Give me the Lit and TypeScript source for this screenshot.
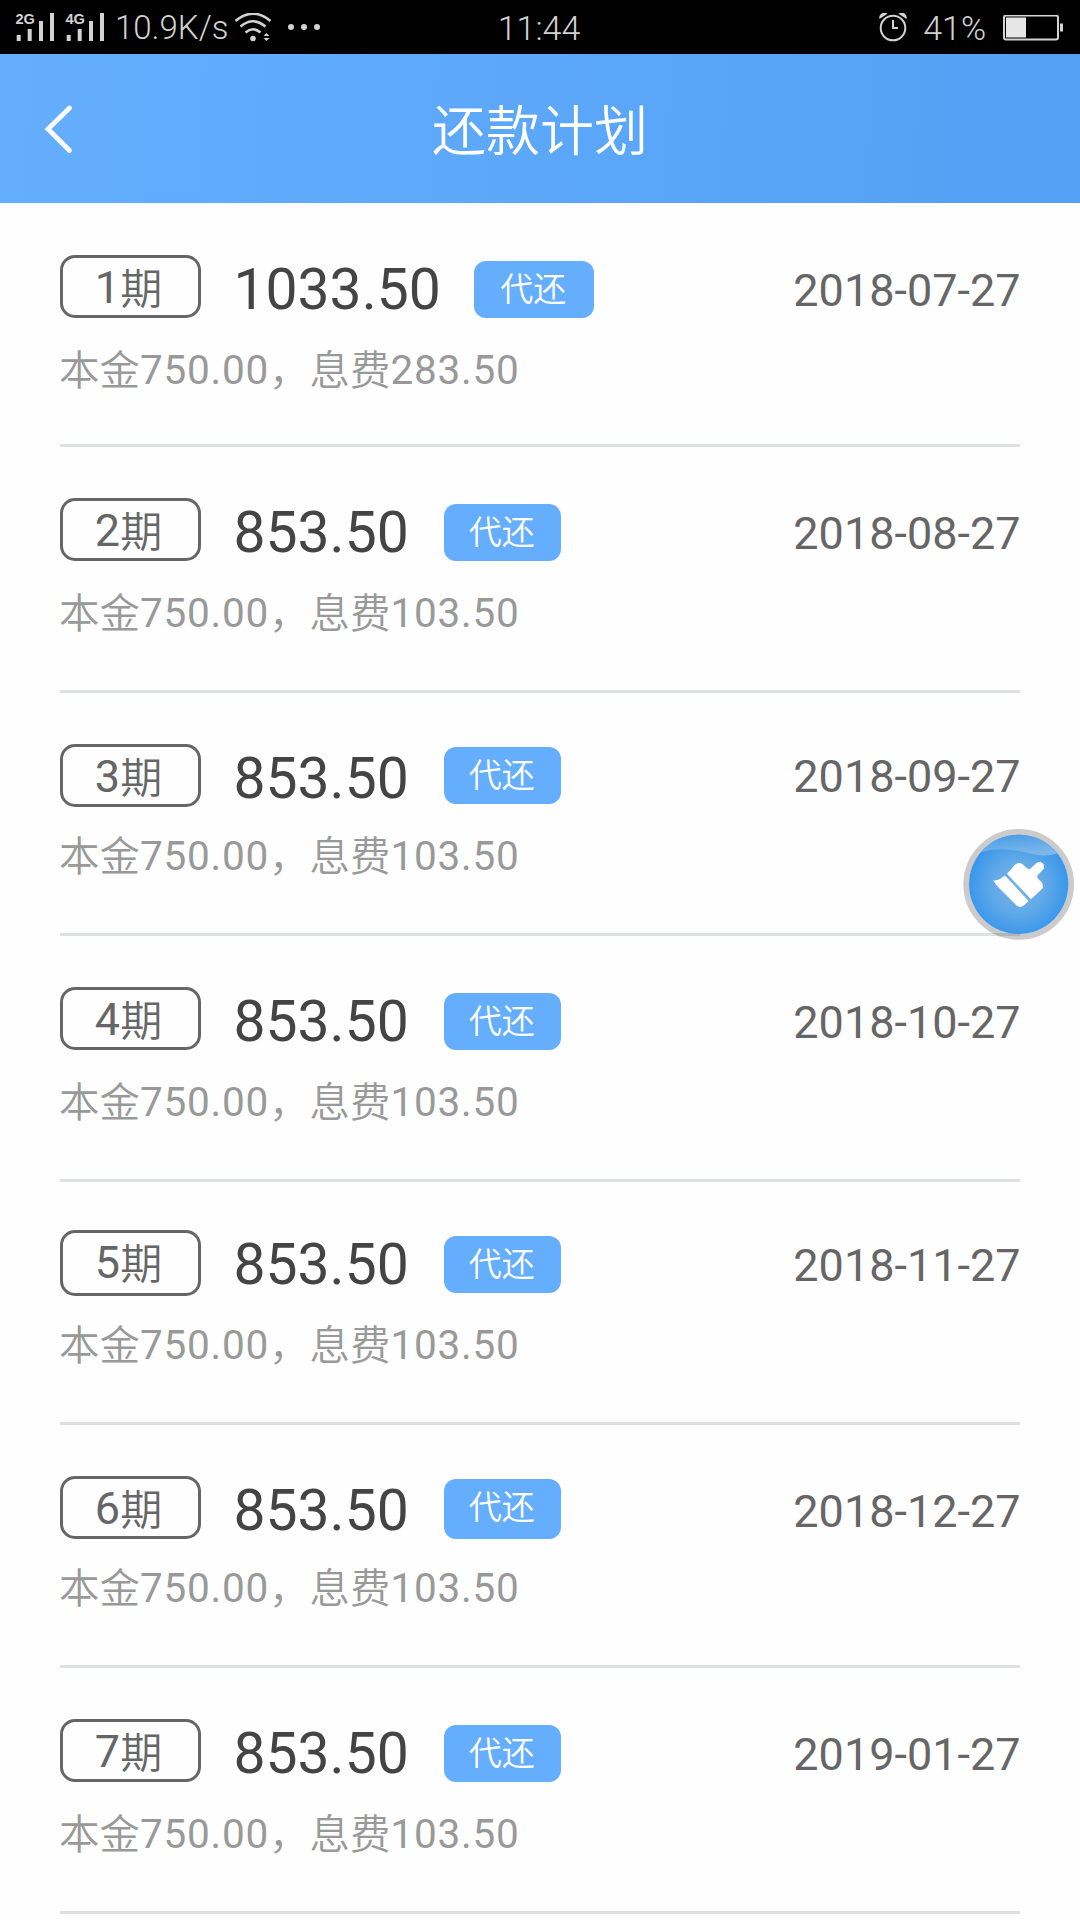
import { LitElement, html, css, svg } from "lit";
import { customElement } from "lit/decorators.js";

interface Installment {
  period: number;
  amount: string;
  interest: string;
  date: string;
}

const PLAN: Installment[] = [
  { period: 1, amount: "1033.50", interest: "283.50", date: "2018-07-27" },
  { period: 2, amount: "853.50", interest: "103.50", date: "2018-08-27" },
  { period: 3, amount: "853.50", interest: "103.50", date: "2018-09-27" },
  { period: 4, amount: "853.50", interest: "103.50", date: "2018-10-27" },
  { period: 5, amount: "853.50", interest: "103.50", date: "2018-11-27" },
  { period: 6, amount: "853.50", interest: "103.50", date: "2018-12-27" },
  { period: 7, amount: "853.50", interest: "103.50", date: "2019-01-27" },
];

const signal = svg`
  <rect x="2.700" y="26" width="4" height="6"/>
  <rect x="13.700" y="20" width="4" height="12"/>
  <rect x="25" y="12" width="4" height="20"/>
  <rect x="36" y="4" width="4" height="28"/>`;

@customElement("status-bar")
class StatusBar extends LitElement {
  static styles = css`
    :host {
      display: flex;
      box-sizing: border-box;
      align-items: center;
      justify-content: space-between;
      height: 54px;
      padding-top: 2px;
      background: #000;
      color: #d2d2d2;
      font-family: Roboto, sans-serif;
      font-weight: 300;
      font-size: 33px;
      line-height: 52px;
    }
    svg { display: block; fill: #d2d2d2; flex: none; }
    .side { display: flex; align-items: center; flex: 1; }
    .left { padding-left: 14px; }
    .right { justify-content: flex-end; padding-right: 16px; }
    .net { font: 700 14px/1 "Liberation Sans", sans-serif; }
    .signal { overflow: visible; }
    .second { margin-left: 8px; }
    .speed { margin-left: 9px; white-space: nowrap; }
    .wifi { margin-left: 5px; }
    .dots { margin-left: 15px; }
    .clock { font-size: 34px; }
    .percent { margin-left: 15px; font-size: 34px; }
    .battery { margin-left: 17px; }
  `;
  render() {
    const bars = (label: string, extra: string) => html`
      <svg class="signal ${extra}" width="42" height="38" viewBox="0 0 42 38">
        ${signal}
        <text class="net" x="1.500" y="15" textLength="19.500" lengthAdjust="spacingAndGlyphs">${label}</text>
      </svg>`;
    return html`
      <div class="side left">
        ${bars("2G", "")}${bars("4G", "second")}
        <span class="speed">10.9K/s</span>
        <svg class="wifi" width="38" height="30" viewBox="0 0 38 30">
          <g fill="none" stroke="#d2d2d2" stroke-width="2.600">
            <path d="M1.500 8Q19 -6.500 36.500 8"/>
            <path d="M6.500 13.500Q19 3 31.500 13.500"/>
            <path d="M11.500 19.500Q19 13 26.500 19.500"/>
          </g>
          <circle cx="19" cy="25.500" r="2.800"/>
          <path d="M29.500 23L32.500 20L35.500 23zM29.500 25L32.500 28L35.500 25z"/>
        </svg>
        <svg class="dots" width="34" height="8" viewBox="0 0 34 8">
          <circle cx="4" cy="3" r="3"/><circle cx="17" cy="3" r="3"/><circle cx="30" cy="3" r="3"/>
        </svg>
      </div>
      <span class="clock">11:44</span>
      <div class="side right">
        <svg width="30" height="30" viewBox="0 0 30 30">
          <circle cx="15" cy="15" r="12.300" fill="none" stroke="#d2d2d2" stroke-width="2"/>
          <path d="M14 7v9h6v-2h-4V7z"/>
          <path d="M1.500 6A5 5 0 0 1 9.500 0.800zM28.500 6A5 5 0 0 0 20.500 0.800z"/>
        </svg>
        <span class="percent">41%</span>
        <svg class="battery" width="61" height="27" viewBox="0 0 61 27">
          <rect x="1" y="0.500" width="54" height="24" rx="2" fill="none" stroke="#d2d2d2" stroke-width="2"/>
          <rect x="3" y="2.500" width="20" height="20" fill="#e6e6e6"/>
          <rect x="57" y="8.500" width="3" height="8"/>
        </svg>
      </div>`;
  }
}

@customElement("nav-header")
class NavHeader extends LitElement {
  static styles = css`
    :host {
      display: grid;
      grid-template-columns: 120px 1fr 120px;
      align-items: center;
      height: 149px;
      background: linear-gradient(93deg, #64aefd, #53a0f4);
      color: #fff;
    }
    .back { display: block; margin-left: 43px; }
    .title {
      margin-top: -1px;
      text-align: center;
      font: 350 54px/78px "Noto Sans CJK SC DemiLight", "Noto Sans CJK SC", sans-serif;
    }
  `;
  render() {
    return html`
      <svg class="back" width="30" height="50" viewBox="0 0 30 50">
        <path d="M26.500 4L5 25L26.500 46.500" fill="none" stroke="#fff" stroke-width="4.800" stroke-linecap="round"/>
      </svg>
      <span class="title">还款计划</span>`;
  }
}

@customElement("clean-button")
class CleanButton extends LitElement {
  static styles = css`
    :host { display: block; width: 112px; height: 112px; }
    svg { display: block; }
  `;
  render() {
    return html`
      <svg width="112" height="112" viewBox="39 39 336 336">
        <defs>
          <radialGradient id="ball" cx="0.500" cy="0.520" r="0.520">
            <stop offset="0" stop-color="#7ab3e4"/>
            <stop offset="0.500" stop-color="#62aae8"/>
            <stop offset="1" stop-color="#3795ec"/>
          </radialGradient>
          <linearGradient id="gloss" x1="0" y1="0" x2="0.300" y2="1">
            <stop offset="0" stop-color="#469ae8"/>
            <stop offset="1" stop-color="#7bb7ea"/>
          </linearGradient>
        </defs>
        <circle cx="206" cy="208" r="157" fill="none" stroke="#000" stroke-opacity="0.200" stroke-width="18"/>
        <circle cx="206" cy="208" r="149" fill="url(#ball)"/>
        <path d="M93 112Q135 60 206 59Q280 60 322 116Q275 128 225 112Q150 93 93 112z" fill="url(#gloss)"/>
        <g fill="#fff">
          <path d="M130 196Q141 197 150 192Q156 189 160 184Q165 182 169 186L236 258L222 271Q211 281 199 271L142 214Q135 206 130 196z"/>
          <path d="M171 176L194 150Q205 140 217 147L231 160Q237 165 243 160L259 144Q267 138 277 143Q285 150 281 162L264 179Q260 184 263 190L275 202Q280 208 278 220L243 253z"/>
        </g>
      </svg>`;
  }
}

@customElement("plan-row")
class PlanRow extends LitElement {
  static properties = { item: { attribute: false } };
  declare item: Installment;
  static styles = css`
    :host {
      display: block;
      box-sizing: border-box;
      padding-top: var(--row-pad, 51px);
      height: var(--row-height, 243px);
      border-bottom: 3px solid #dfe0e0;
      font-family: Roboto, "Noto Sans CJK SC", sans-serif;
    }
    .cjk {
      font-family: "Noto Sans CJK SC DemiLight", "Noto Sans CJK SC", sans-serif;
      font-weight: 350;
    }
    .top { display: flex; align-items: flex-start; height: 63px; }
    .period {
      box-sizing: border-box;
      width: 141px;
      height: var(--period-height, 63px);
      padding-right: 4px;
      border: 3px solid #666;
      border-radius: 15px;
      color: #666;
      font-size: 45px;
      line-height: 59px;
      text-align: center;
    }
    .period .cjk { font-size: 42px; line-height: 1; vertical-align: -1px; }
    .amount { margin-left: 32.500px; font-size: 57px; line-height: 69px; color: #444; }
    .tag {
      box-sizing: border-box;
      margin: var(--tag-top, 6px) 0 0 var(--tag-gap, 35.600px);
      width: var(--tag-width, 117px);
      height: var(--tag-height, 57px);
      padding-right: 2px;
      border-radius: 12px;
      background: #64aefd;
      color: #fff;
      font-size: 33px;
      line-height: 52px;
      text-align: center;
    }
    .date {
      margin: var(--date-top, 0px) -0.500px 0 auto;
      font-size: 45px;
      line-height: 71px;
      color: #666;
    }
    .detail {
      margin: var(--detail-top, 23px) 0 0 -1px;
      font-size: 40.500px;
      line-height: 58px;
      letter-spacing: 0.750px;
      color: #999;
      white-space: nowrap;
    }
    .detail .cjk { letter-spacing: 0; line-height: 1; vertical-align: -1px; }
  `;
  render() {
    const { period, amount, interest, date } = this.item;
    return html`
      <div class="top">
        <div class="period">${period}<span class="cjk">期</span></div>
        <div class="amount">${amount}</div>
        <div class="tag cjk">代还</div>
        <div class="date">${date}</div>
      </div>
      <div class="detail"><span class="cjk">本金</span>750.00<span class="cjk">，息费</span>${interest}</div>`;
  }
}

@customElement("app-root")
class AppRoot extends LitElement {
  static styles = css`
    :host {
      display: block;
      position: relative;
      width: 1080px;
      height: 1920px;
      overflow: hidden;
      background: #fefefe;
    }
    .list { padding: 1px 60px 0; }
    .row:nth-child(1) { --tag-gap: 33.600px; --tag-width: 120px; }
    .row:nth-child(2), .row:nth-child(4), .row:nth-child(7) { --row-height: 246px; }
    .row:nth-child(3) { --tag-top: 3px; --detail-top: 20px; --date-top: -3px; }
    .row:nth-child(5) { --row-pad: 48px; --period-height: 66px; }
    .row:nth-child(6) { --tag-top: 3px; --tag-height: 60px; --detail-top: 20px; }
    .float { position: absolute; left: 963px; top: 828px; }
  `;
  render() {
    return html`
      <status-bar></status-bar>
      <nav-header></nav-header>
      <main class="list">${PLAN.map((item) => html`<plan-row class="row" .item=${item}></plan-row>`)}</main>
      <clean-button class="float"></clean-button>`;
  }
}
